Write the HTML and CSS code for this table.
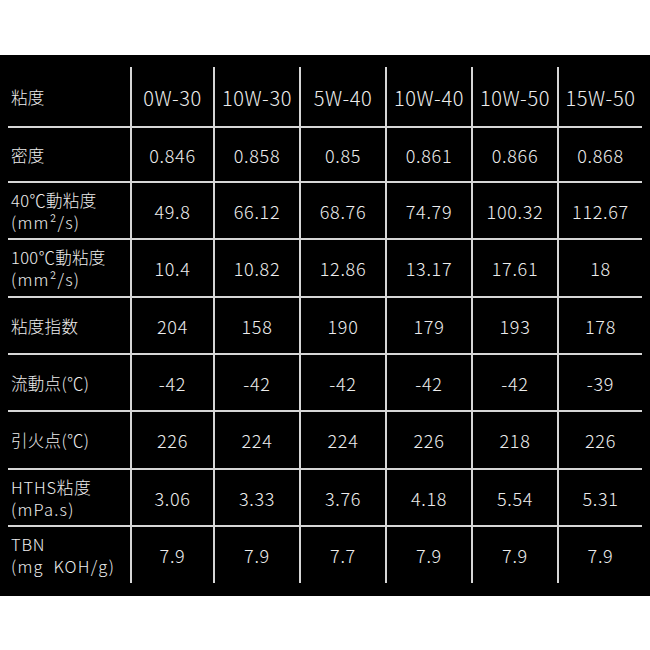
FILE: index.html
```html
<!DOCTYPE html>
<html lang="ja">
<head>
<meta charset="utf-8">
<title>粘度表</title>
<link rel="stylesheet" href="styles.css">
</head>
<body>
<div class="panel">
  <div class="grid">
    <div class="cell label">粘度</div>
    <div class="cell head">0W-30</div>
    <div class="cell head">10W-30</div>
    <div class="cell head">5W-40</div>
    <div class="cell head">10W-40</div>
    <div class="cell head">10W-50</div>
    <div class="cell head">15W-50</div>

    <div class="cell label">密度</div>
    <div class="cell">0.846</div>
    <div class="cell">0.858</div>
    <div class="cell">0.85</div>
    <div class="cell">0.861</div>
    <div class="cell">0.866</div>
    <div class="cell">0.868</div>

    <div class="cell label"><span>40℃動粘度</span><span class="unit">(mm²/s)</span></div>
    <div class="cell">49.8</div>
    <div class="cell">66.12</div>
    <div class="cell">68.76</div>
    <div class="cell">74.79</div>
    <div class="cell">100.32</div>
    <div class="cell">112.67</div>

    <div class="cell label"><span>100℃動粘度</span><span class="unit">(mm²/s)</span></div>
    <div class="cell">10.4</div>
    <div class="cell">10.82</div>
    <div class="cell">12.86</div>
    <div class="cell">13.17</div>
    <div class="cell">17.61</div>
    <div class="cell">18</div>

    <div class="cell label">粘度指数</div>
    <div class="cell">204</div>
    <div class="cell">158</div>
    <div class="cell">190</div>
    <div class="cell">179</div>
    <div class="cell">193</div>
    <div class="cell">178</div>

    <div class="cell label">流動点(℃)</div>
    <div class="cell">-42</div>
    <div class="cell">-42</div>
    <div class="cell">-42</div>
    <div class="cell">-42</div>
    <div class="cell">-42</div>
    <div class="cell">-39</div>

    <div class="cell label">引火点(℃)</div>
    <div class="cell">226</div>
    <div class="cell">224</div>
    <div class="cell">224</div>
    <div class="cell">226</div>
    <div class="cell">218</div>
    <div class="cell">226</div>

    <div class="cell label"><span class="latin">HTHS粘度</span><span class="unit">(mPa.s)</span></div>
    <div class="cell">3.06</div>
    <div class="cell">3.33</div>
    <div class="cell">3.76</div>
    <div class="cell">4.18</div>
    <div class="cell">5.54</div>
    <div class="cell">5.31</div>

    <div class="cell label"><span class="latin">TBN</span><span class="unit">(mg&nbsp; KOH/g)</span></div>
    <div class="cell">7.9</div>
    <div class="cell">7.9</div>
    <div class="cell">7.7</div>
    <div class="cell">7.9</div>
    <div class="cell">7.9</div>
    <div class="cell">7.9</div>
  </div>
</div>
</body>
</html>
```
FILE: styles.css
```css
html, body {
  margin: 0;
  padding: 0;
  background: #ffffff;
}

body {
  padding-top: 55px;
  font-family: "Noto Sans CJK JP", "Noto Sans", sans-serif;
  font-weight: 300;
}

.panel {
  background: #000000;
  height: 541px;
  box-sizing: border-box;
  padding: 12px 8px 0 8px;
}

.grid {
  display: grid;
  grid-template-columns: 122px 81px 84px 84px 84px 84px 83px;
  grid-template-rows: 59px 53px 55px 56px 55px 55px 56px 55px 56px;
  gap: 2px;
  background: #d6d6d6;
  width: 634px;
}

.cell {
  background: #000000;
  color: #ededed;
  font-size: 18px;
  letter-spacing: 0.7px;
  display: flex;
  align-items: center;
  justify-content: center;
  text-align: center;
  box-sizing: border-box;
}

.head {
  font-size: 20px;
  letter-spacing: 0.6px;
  padding-top: 1px;
}

.label {
  flex-direction: column;
  align-items: flex-start;
  justify-content: center;
  text-align: left;
  padding-left: 3px;
  line-height: 22px;
  font-size: 16.5px;
  letter-spacing: 0.3px;
}

.latin {
  letter-spacing: 0.8px;
}

.unit {
  letter-spacing: 1.2px;
}
```
